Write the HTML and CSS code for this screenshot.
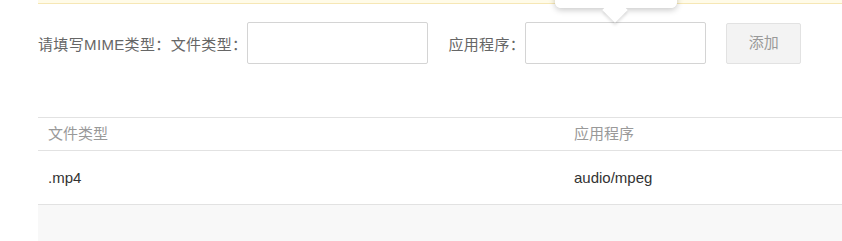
FILE: index.html
```html
<!DOCTYPE html>
<html lang="zh-CN">
<head>
<meta charset="utf-8">
<link rel="stylesheet" href="styles.css">
</head>
<body>
<div class="page">
  <div class="notice"></div>
  <div class="tip"><span class="tip-arrow"></span></div>
  <div class="form-row">
    <span class="label">请填写MIME类型：文件类型：</span>
    <input class="field" type="text">
    <span class="label label-app">应用程序：</span>
    <input class="field" type="text">
    <button class="btn">添加</button>
  </div>
  <table class="mime-table">
    <thead>
      <tr><th class="col-type">文件类型</th><th>应用程序</th></tr>
    </thead>
    <tbody>
      <tr><td class="col-type">.mp4</td><td>audio/mpeg</td></tr>
      <tr class="empty"><td></td><td></td></tr>
    </tbody>
  </table>
</div>
</body>
</html>
```
FILE: styles.css
```css
html, body {
  margin: 0;
  padding: 0;
  background: #fff;
  overflow: hidden;
}
body {
  font-family: "Liberation Sans", "Noto Sans CJK SC", sans-serif;
  font-size: 15px;
  color: #666;
}
.page {
  position: relative;
  padding-left: 38px;
  width: 1100px;
}
.notice {
  height: 3px;
  background: #fffbe8;
  border-bottom: 1px solid #f6e7b5;
}
.tip {
  position: absolute;
  left: 555px;
  top: -10px;
  width: 122px;
  height: 18px;
  background: #fff;
  border-radius: 6px;
  box-shadow: 0 2px 6px rgba(0,0,0,0.22);
}
.tip-arrow {
  position: absolute;
  left: 51px;
  top: 11px;
  width: 18px;
  height: 18px;
  background: #fff;
  transform: rotate(45deg);
  box-shadow: 2px 2px 3px rgba(0,0,0,0.12);
}
.tip::after {
  content: "";
  position: absolute;
  left: 0;
  right: 0;
  top: 0;
  height: 18px;
  background: #fff;
  border-radius: 6px;
}
.form-row {
  display: flex;
  align-items: center;
  margin-top: 18px;
  height: 42px;
}
.label {
  white-space: nowrap;
  color: #666;
  font-size: 15px;
  letter-spacing: 0.35px;
}
.label-app {
  margin-left: 20px;
}
.field {
  box-sizing: border-box;
  width: 181px;
  height: 42px;
  margin: 0;
  border: 1px solid #d4d4d4;
  border-radius: 2px;
  background: #fff;
  outline: none;
}
.btn {
  box-sizing: border-box;
  margin-left: 20px;
  width: 75px;
  height: 41px;
  background: #f3f3f3;
  border: 1px solid #e2e2e2;
  border-radius: 2px;
  color: #999;
  font-family: inherit;
  font-size: 15px;
  padding: 0 0 4px;
}
.mime-table {
  margin-top: 53px;
  width: 1052px;
  border-collapse: collapse;
  border-top: 1px solid #e2e2e2;
}
.mime-table th, .mime-table td {
  text-align: left;
  padding: 0 10px;
  font-weight: normal;
}
.mime-table .col-type {
  width: 506px;
}
.mime-table th {
  box-sizing: border-box;
  height: 33px;
  color: #999;
  font-size: 15px;
  border-bottom: 1px solid #e2e2e2;
  padding-bottom: 3px;
}
.mime-table td {
  height: 53px;
  color: #333;
  font-size: 15px;
  border-bottom: 1px solid #e2e2e2;
}
.mime-table tr.empty td {
  height: 40px;
  background: #f8f8f8;
  border-bottom: none;
}
```
